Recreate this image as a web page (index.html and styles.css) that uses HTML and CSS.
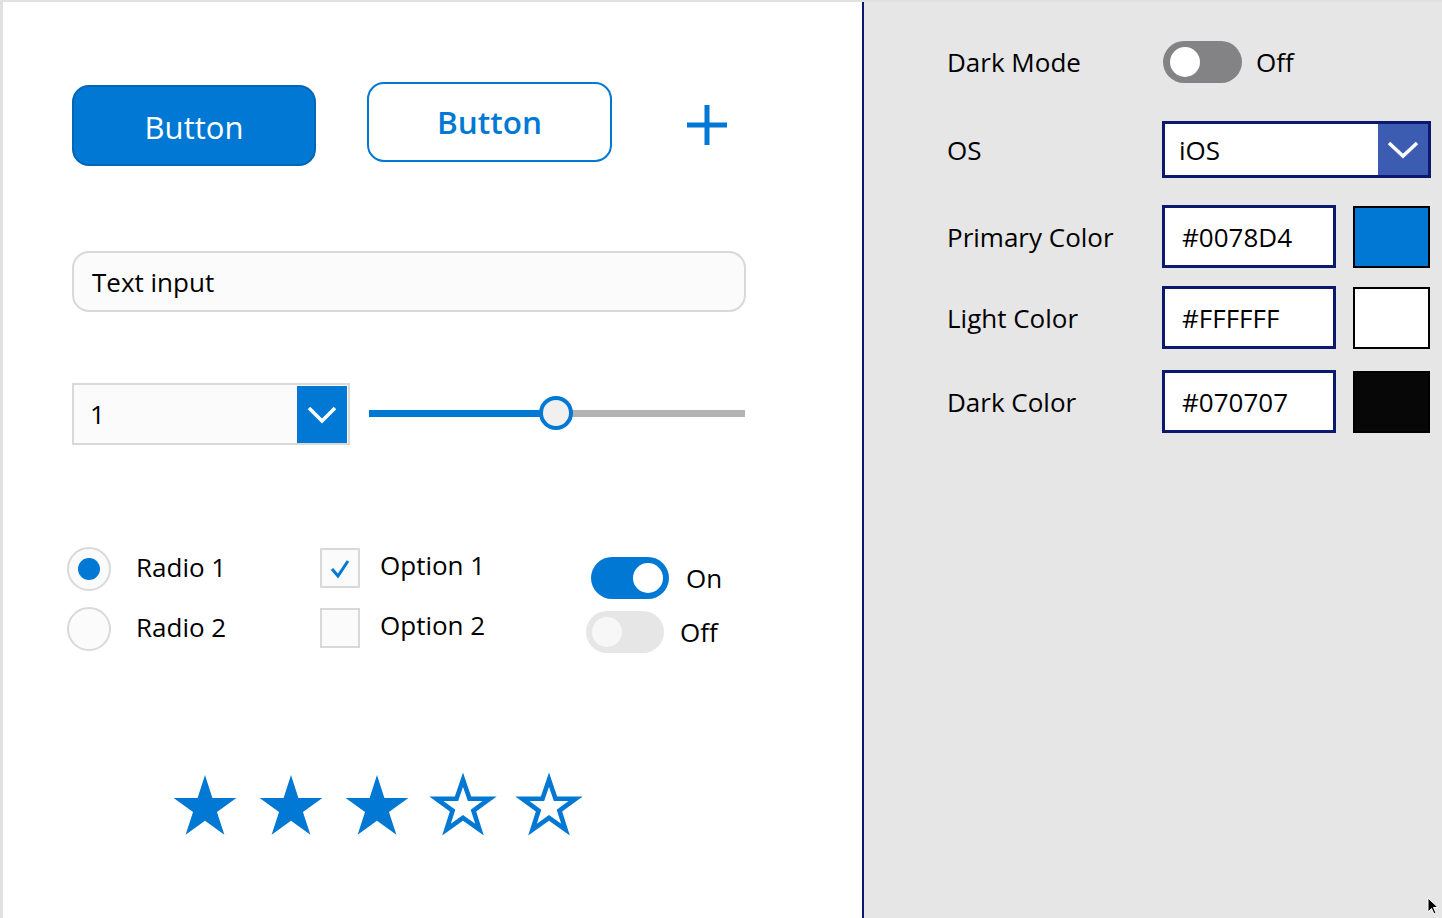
FILE: index.html
```html
<!DOCTYPE html>
<html>
<head>
<meta charset="utf-8">
<link rel="stylesheet" href="styles.css">
</head>
<body>
<div class="app">
  <div class="left">
    <div class="row buttons">
      <div class="btn-primary">Button</div>
      <div class="btn-outline">Button</div>
      <svg class="plus" viewBox="0 0 40 40"><path d="M20 0V40M0 20H40" stroke="#0078D4" stroke-width="5" fill="none"/></svg>
    </div>
    <div class="text-input">Text input</div>
    <div class="row combo-row">
      <div class="dropdown">
        <span class="dd-value">1</span>
        <div class="dd-btn"><svg viewBox="0 0 50 57" width="50" height="57"><path d="M12 22L25 35L38 22" stroke="#fff" stroke-width="3.5" fill="none"/></svg></div>
      </div>
      <div class="slider">
        <div class="track"><div class="fill"></div></div>
        <div class="thumb"></div>
      </div>
    </div>
    <div class="row choices">
      <div class="radios">
        <div class="radio-item"><span class="radio on"></span><span class="lbl">Radio 1</span></div>
        <div class="radio-item"><span class="radio"></span><span class="lbl">Radio 2</span></div>
      </div>
      <div class="checks">
        <div class="check-item"><span class="box"><svg viewBox="0 0 36 36" width="36" height="36"><path d="M10 19L16 26L26 11" stroke="#0078D4" stroke-width="3" fill="none"/></svg></span><span class="lbl">Option 1</span></div>
        <div class="check-item"><span class="box"></span><span class="lbl">Option 2</span></div>
      </div>
      <div class="toggles">
        <div class="toggle-item t-on"><span class="toggle on"><span class="knob"></span></span><span class="lbl">On</span></div>
        <div class="toggle-item t-off"><span class="toggle off"><span class="knob"></span></span><span class="lbl">Off</span></div>
      </div>
    </div>
    <div class="row stars">
      <svg class="star" viewBox="0 0 64 58"><polygon class="sf" points="32,0 39.17,22.13 62.43,22.11 43.6,35.77 50.81,57.89 32,44.2 13.19,57.89 20.4,35.77 1.57,22.11 24.83,22.13"/></svg>
      <svg class="star" viewBox="0 0 64 58"><polygon class="sf" points="32,0 39.17,22.13 62.43,22.11 43.6,35.77 50.81,57.89 32,44.2 13.19,57.89 20.4,35.77 1.57,22.11 24.83,22.13"/></svg>
      <svg class="star" viewBox="0 0 64 58"><polygon class="sf" points="32,0 39.17,22.13 62.43,22.11 43.6,35.77 50.81,57.89 32,44.2 13.19,57.89 20.4,35.77 1.57,22.11 24.83,22.13"/></svg>
      <svg class="star" viewBox="0 0 64 58"><polygon class="so" points="32,4.5 38.3,22.9 57.8,22.9 42.1,34.4 48.0,52.9 32,41.5 16.0,52.9 21.9,34.4 6.2,22.9 25.7,22.9"/></svg>
      <svg class="star" viewBox="0 0 64 58"><polygon class="so" points="32,4.5 38.3,22.9 57.8,22.9 42.1,34.4 48.0,52.9 32,41.5 16.0,52.9 21.9,34.4 6.2,22.9 25.7,22.9"/></svg>
    </div>
  </div>
  <div class="right">
    <div class="prow r-dark">
      <span class="plabel">Dark Mode</span>
      <span class="toggle dm"><span class="knob"></span></span>
      <span class="plabel off-l">Off</span>
    </div>
    <div class="prow r-os">
      <span class="plabel">OS</span>
      <div class="os-dd">
        <span class="os-val">iOS</span>
        <div class="os-btn"><svg viewBox="0 0 50 51" width="50" height="51"><path d="M11 19L25 32L39 19" stroke="#fff" stroke-width="3.5" fill="none"/></svg></div>
      </div>
    </div>
    <div class="prow r-color r1">
      <span class="plabel">Primary Color</span>
      <div class="hex">#0078D4</div>
      <div class="swatch" style="background:#0078D4"></div>
    </div>
    <div class="prow r-color r2">
      <span class="plabel">Light Color</span>
      <div class="hex">#FFFFFF</div>
      <div class="swatch" style="background:#FFFFFF"></div>
    </div>
    <div class="prow r-color r3">
      <span class="plabel">Dark Color</span>
      <div class="hex">#070707</div>
      <div class="swatch" style="background:#070707"></div>
    </div>
  </div>
  <svg class="cursor" viewBox="0 0 12 18" width="12" height="18"><path d="M1 1V15L4.5 11.5L7 17L9 16L6.5 10.5H11Z" fill="#000" stroke="#fff" stroke-width="1"/></svg>
</div>
</body>
</html>
```
FILE: styles.css
```css
* { box-sizing: border-box; }
html, body { margin: 0; padding: 0; }
body {
  width: 1442px;
  height: 918px;
  overflow: hidden;
  background: #e1e1e1;
  font-family: "Open Sans", "Noto Sans", sans-serif;
  color: #000;
}
.app {
  position: relative;
  display: flex;
  height: 918px;
  padding: 2px 0 0 3px;
}
.left {
  width: 861px;
  height: 916px;
  background: #fff;
  border-right: 2px solid #0b1a6e;
  padding: 80px 0 0 69px;
  display: flex;
  flex-direction: column;
}
.row { display: flex; }
.buttons { align-items: flex-start; }
.btn-primary {
  margin-top: 3px;
  width: 244px;
  height: 81px;
  border-radius: 17px;
  background: #0078D4;
  border: 2px solid #0067b8;
  color: #fff;
  font-size: 31px;
  display: flex;
  align-items: center;
  justify-content: center;
  padding-top: 2px;
}
.btn-outline {
  margin-left: 51px;
  width: 245px;
  height: 80px;
  border-radius: 17px;
  border: 2px solid #0078D4;
  color: #0078D4;
  font-size: 31.5px;
  font-weight: 600;
  display: flex;
  align-items: center;
  justify-content: center;
  padding-bottom: 1px;
}
.plus {
  margin-left: 75px;
  margin-top: 23px;
  width: 40px;
  height: 40px;
}
.text-input {
  margin-top: 85px;
  width: 674px;
  height: 61px;
  border: 2px solid #d9d9d9;
  border-radius: 17px;
  background: #fbfbfb;
  font-size: 26px;
  display: flex;
  align-items: center;
  padding-left: 18px;
  padding-top: 1px;
}
.combo-row { margin-top: 71px; align-items: center; }
.dropdown {
  width: 278px;
  height: 62px;
  border: 2px solid #d9d9d9;
  background: #fbfbfb;
  display: flex;
  align-items: center;
  justify-content: space-between;
  padding: 1px 1px 1px 16px;
}
.dd-value { font-size: 26px; }
.dd-btn { width: 50px; height: 57px; background: #0078D4; }
.dd-btn svg { display: block; }
.slider {
  position: relative;
  margin-left: 19px;
  width: 376px;
  height: 36px;
  display: flex;
  align-items: center;
}
.track { width: 100%; height: 7px; background: #b3b3b3; margin-top: -2px; }
.fill { width: 187px; height: 100%; background: #0078D4; }
.thumb {
  position: absolute;
  left: 170px;
  top: 0px;
  width: 34px;
  height: 34px;
  border-radius: 50%;
  border: 4px solid #0078D4;
  background: #f0f0f0;
}
.choices { margin-top: 102px; height: 108px; margin-left: -5px; }
.lbl { font-size: 26px; }
.radios { width: 253px; flex: none; display: flex; flex-direction: column; gap: 16px; }
.radio-item { display: flex; align-items: center; height: 44px; }
.radio {
  width: 44px; height: 44px;
  border-radius: 50%;
  border: 2px solid #d9d9d9;
  background: #fbfbfb;
  display: flex; align-items: center; justify-content: center;
  margin-right: 25px;
}
.radio.on::after {
  content: "";
  width: 22px; height: 22px; border-radius: 50%;
  background: #0078D4;
}
.radio-item .lbl { padding-bottom: 4px; }
.checks { width: 266px; flex: none; display: flex; flex-direction: column; gap: 20px; padding-top: 1px; }
.check-item { display: flex; align-items: center; height: 40px; }
.box {
  width: 40px; height: 40px;
  border: 2px solid #d9d9d9;
  background: #fbfbfb;
  margin-right: 20px;
}
.box svg { display: block; }
.check-item .lbl { padding-bottom: 6px; }
.toggles { display: flex; flex-direction: column; }
.toggle-item { display: flex; align-items: center; height: 42px; }
.t-on { margin-top: 10px; margin-left: 5px; }
.t-off { margin-top: 12px; }
.toggle {
  width: 78px; height: 42px; border-radius: 21px;
  position: relative;
  display: inline-block;
  flex: none;
}
.toggle.on { background: #0078D4; }
.toggle.off { background: #e6e6e6; }
.toggle .knob {
  position: absolute;
  top: 6px;
  width: 30px; height: 30px; border-radius: 50%;
}
.toggle.on .knob { right: 6px; background: #fff; }
.toggle.off .knob { left: 6px; background: #f7f7f7; }
.t-on .lbl { margin-left: 17px; }
.t-off .lbl { margin-left: 16px; }
.stars { margin-top: 120px; margin-left: 100px; gap: 20px; }
.star { width: 66px; height: 60px; overflow: visible; }
.sf { fill: #0078D4; }
.so { fill: none; stroke: #0078D4; stroke-width: 4.5; stroke-linejoin: miter; }

.right {
  flex: 1;
  height: 916px;
  background: #e6e6e6;
  padding: 39px 0 0 83px;
  display: flex;
  flex-direction: column;
}
.prow { display: flex; align-items: center; }
.plabel { font-size: 26px; }
.prow > .plabel:first-child { width: 215px; flex: none; }
.toggle.dm { width: 79px; background: #838386; margin-left: 1px; }
.toggle.dm .knob { left: 7px; background: #fff; }
.off-l { margin-left: 14px; }
.r-os { margin-top: 38px; }
.os-dd {
  width: 269px; height: 57px;
  border: 3px solid #0b1a6e;
  background: #fff;
  display: flex; align-items: center; justify-content: space-between;
  padding-left: 14px;
}
.os-val { font-size: 26px; }
.os-btn { width: 50px; height: 51px; background: #3b5cb0; }
.os-btn svg { display: block; }
.r1 { margin-top: 27px; }
.r2 { margin-top: 18px; }
.r3 { margin-top: 21px; }
.hex {
  width: 174px; height: 63px;
  border: 3px solid #0b1a6e;
  background: #fff;
  font-size: 26px;
  display: flex; align-items: center;
  padding-left: 17px;
}
.swatch {
  margin-left: 17px;
  width: 77px; height: 62px;
  border: 2px solid #000;
}
.cursor { position: absolute; left: 1427px; top: 897px; }
```
